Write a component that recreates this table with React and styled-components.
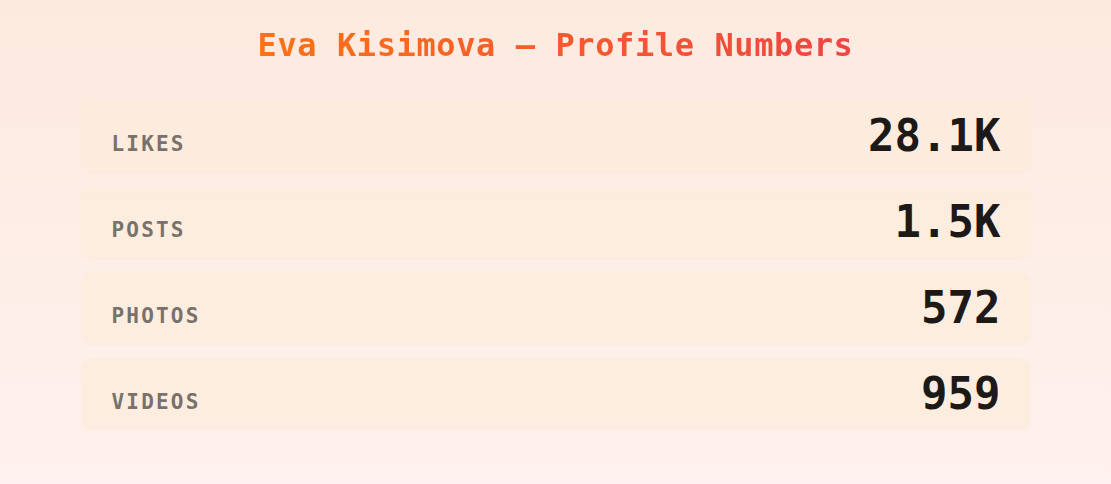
import React from "react";
import styled, { createGlobalStyle } from "styled-components";

const Global = createGlobalStyle`
  html, body { margin: 0; padding: 0; }
  body {
    min-height: 484px;
    background: linear-gradient(180deg, #fdeadf 0%, #fdeee8 60%, #fef1ef 100%);
    font-family: "DejaVu Sans Mono", "Liberation Mono", monospace;
  }
`;

const Page = styled.main`
  box-sizing: border-box;
  min-height: 484px;
  padding: 25px 0 0;
  display: flex;
  flex-direction: column;
  align-items: center;
`;

const Title = styled.h1`
  margin: 0 0 35px;
  font-size: 32px;
  line-height: 40px;
  font-weight: 700;
  letter-spacing: 0.6px;
  background: linear-gradient(90deg, #f97316 0%, #ef4444 100%);
  -webkit-background-clip: text;
  background-clip: text;
  color: transparent;
`;

const List = styled.section`
  width: 950px;
  display: flex;
  flex-direction: column;
  gap: 14px;
`;

const Card = styled.div`
  box-sizing: border-box;
  height: 72px;
  padding: 14px 30px 14px 31px;
  display: flex;
  justify-content: space-between;
  align-items: baseline;
  border-radius: 10px;
  background: rgba(253, 236, 220, 0.8);
  box-shadow: 0 1px 2px rgba(234, 120, 60, 0.04);
`;

const Label = styled.span`
  font-size: 21px;
  font-weight: 700;
  letter-spacing: 2.2px;
  color: #78716c;
  text-transform: uppercase;
`;

const Value = styled.span`
  font-size: 44px;
  line-height: 44px;
  font-weight: 700;
  color: #1c1917;
`;

const stats = [
  { label: "Likes", value: "28.1K" },
  { label: "Posts", value: "1.5K" },
  { label: "Photos", value: "572" },
  { label: "Videos", value: "959" },
];

export default function App() {
  return (
    <>
      <Global />
      <Page>
        <Title>Eva Kisimova — Profile Numbers</Title>
        <List>
          {stats.map((s) => (
            <Card key={s.label}>
              <Label>{s.label}</Label>
              <Value>{s.value}</Value>
            </Card>
          ))}
        </List>
      </Page>
    </>
  );
}
